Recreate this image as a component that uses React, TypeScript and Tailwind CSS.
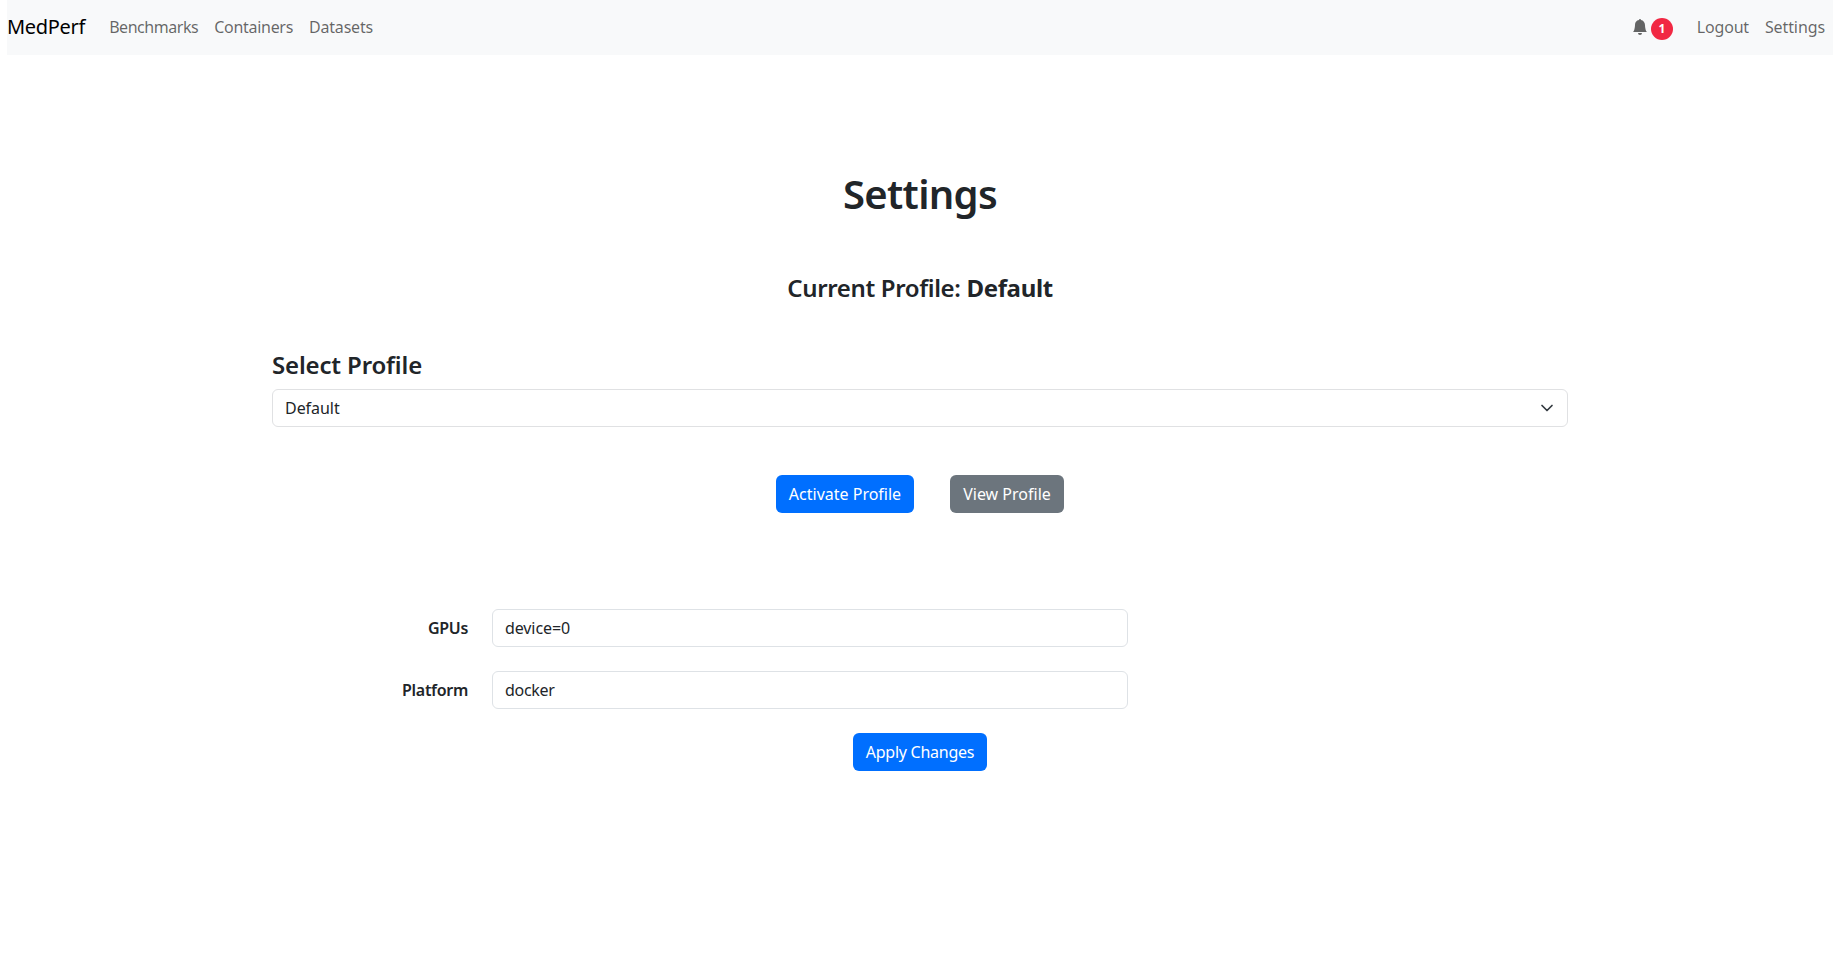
import React from "react";

function NavLink({ label, className }: { label: string; className: string }) {
  return <a className={"text-[16px] leading-[24px] text-[#00000099] " + className}>{label}</a>;
}

function App() {
  return (
    <div className="min-h-screen bg-white pl-[7px] text-[#212529] font-['Noto_Sans',sans-serif]">
      <nav className="flex h-[55px] items-center justify-between bg-[#f8f9fa]">
        <div className="flex items-center pb-[2px]">
          <a className="mr-[24px] text-[20px] leading-[30px] tracking-[-0.3px] text-black">MedPerf</a>
          <NavLink label="Benchmarks" className="mr-[16px] tracking-[-0.45px]" />
          <NavLink label="Containers" className="mr-[16px] tracking-[-0.3px]" />
          <NavLink label="Datasets" className="tracking-[-0.2px]" />
        </div>
        <div className="flex items-center">
          <div className="mr-[24px] flex items-center">
            <svg width="16" height="16" viewBox="0 0 16 16" fill="#00000099" className="mb-[1px]">
              <path d="M8 16a2 2 0 0 0 2-2H6a2 2 0 0 0 2 2zm.995-14.901a1 1 0 1 0-1.99 0A5.002 5.002 0 0 0 3 6c0 1.098-.5 6-2 7h14c-1.5-1-2-5.902-2-7 0-2.42-1.72-4.44-4.005-4.901z" />
            </svg>
            <span className="mt-[2px] ml-[3px] flex h-[22px] w-[22px] items-center justify-center rounded-full bg-[#f12843] text-[12px] font-bold text-white">
              1
            </span>
          </div>
          <NavLink label="Logout" className="mr-[16px] pb-[2px] tracking-[-0.2px]" />
          <NavLink label="Settings" className="mr-[8px] pb-[2px] tracking-[-0.1px]" />
        </div>
      </nav>

      <main className="mx-auto w-[1296px]">
        <h1 className="mt-[115px] text-center text-[40px] leading-[48px] font-semibold tracking-[-0.7px]">Settings</h1>
        <h4 className="mt-[55px] text-center text-[24px] leading-[29px] font-semibold tracking-[-0.35px]">
          Current Profile: <span className="font-bold">Default</span>
        </h4>
        <h4 className="mt-[48px] text-[24px] leading-[29px] font-semibold tracking-[-0.15px]">Select Profile</h4>
        <div className="mt-[10px] flex h-[38px] items-center justify-between rounded-[6px] border border-[#e0e1e3] px-3 text-[16px]">
          <span className="tracking-[-0.05px]">Default</span>
          <svg width="16" height="16" viewBox="0 0 16 16" fill="none" stroke="#343a40" strokeWidth="1.7" strokeLinecap="round" strokeLinejoin="round">
            <path d="m3 5.5 5 5 5-5" />
          </svg>
        </div>
        <div className="mt-[48px] flex justify-center gap-[36px]">
          <button className="h-[38px] w-[138px] rounded-[6px] bg-[#006fff] text-[16px] text-white">Activate Profile</button>
          <button className="h-[38px] w-[114px] rounded-[6px] bg-[#6c757d] text-[16px] text-white">View Profile</button>
        </div>
        <form className="mt-[96px]">
          <div className="flex items-center">
            <label className="w-[196px] text-right text-[16px] font-semibold tracking-[-0.3px]">GPUs</label>
            <div className="ml-[24px] flex h-[38px] w-[636px] items-center rounded-[6px] border border-[#dee2e6] px-3 text-[16px] tracking-[-0.1px]">device=0</div>
          </div>
          <div className="mt-[24px] flex items-center">
            <label className="w-[196px] text-right text-[16px] font-semibold tracking-[-0.3px]">Platform</label>
            <div className="ml-[24px] flex h-[38px] w-[636px] items-center rounded-[6px] border border-[#dee2e6] px-3 text-[16px] tracking-[-0.3px]">docker</div>
          </div>
          <div className="mt-[24px] flex justify-center">
            <button className="h-[38px] w-[134px] rounded-[6px] bg-[#006fff] text-[16px] tracking-[-0.25px] text-white">Apply Changes</button>
          </div>
        </form>
      </main>
    </div>
  );
}

export default App;
